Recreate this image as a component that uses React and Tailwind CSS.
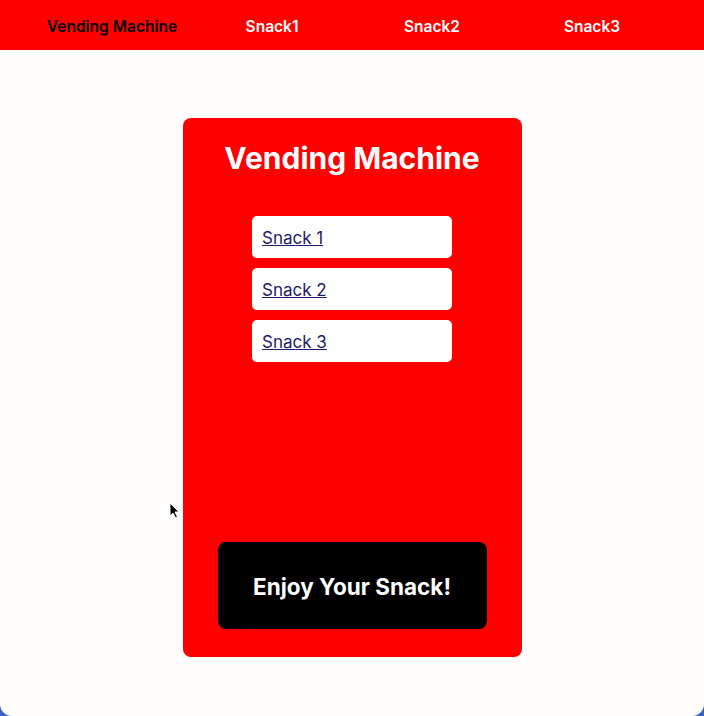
export default function App() {
  const snacks = ["Snack 1", "Snack 2", "Snack 3"];

  return (
    <div className="h-[716px] bg-[#3b5fc4]" style={{ fontFamily: "Inter, 'Liberation Sans', sans-serif" }}>
      <div className="relative h-full bg-[#fffdfc] rounded-b-[12px] overflow-hidden">
        {/* top nav */}
        <nav className="h-[50px] bg-[#ff0000] grid grid-cols-4 px-8 pt-[3px] items-center text-[15.5px] font-semibold">
          <span className="text-center text-black">Vending Machine</span>
          <span className="text-center text-white">Snack1</span>
          <span className="text-center text-white">Snack2</span>
          <span className="text-center text-white">Snack3</span>
        </nav>

        <div className="flex justify-center pt-[68px]">
          <div className="w-[339px] h-[539px] bg-[#ff0000] rounded-[8px] flex flex-col items-center pt-[21px] pb-[28px]">
            <h1 className="text-[30px] leading-[38px] font-bold text-white">Vending Machine</h1>

            <ul className="mt-[39px] flex flex-col gap-[10px]">
              {snacks.map((s) => (
                <li key={s} className="w-[200px] h-[42px] bg-white rounded-[5px] flex items-center px-[10px] pt-[3px]">
                  <a href="#" className="text-[17px] text-[#1c1a6b] underline">{s}</a>
                </li>
              ))}
            </ul>

            <button className="mt-auto w-[269px] h-[87px] bg-black rounded-[8px] text-white text-[22.5px] font-bold pt-[2px]">
              Enjoy Your Snack!
            </button>
          </div>
        </div>

        {/* mouse cursor */}
        <svg className="absolute left-[169px] top-[502px]" width="11" height="17" viewBox="0 0 11 17">
          <path d="M1 1 L1 14 L4 11 L6.5 16 L8.5 15 L6 10 L10 10 Z" fill="#000" stroke="#fff" strokeWidth="1" />
        </svg>
      </div>
    </div>
  );
}
